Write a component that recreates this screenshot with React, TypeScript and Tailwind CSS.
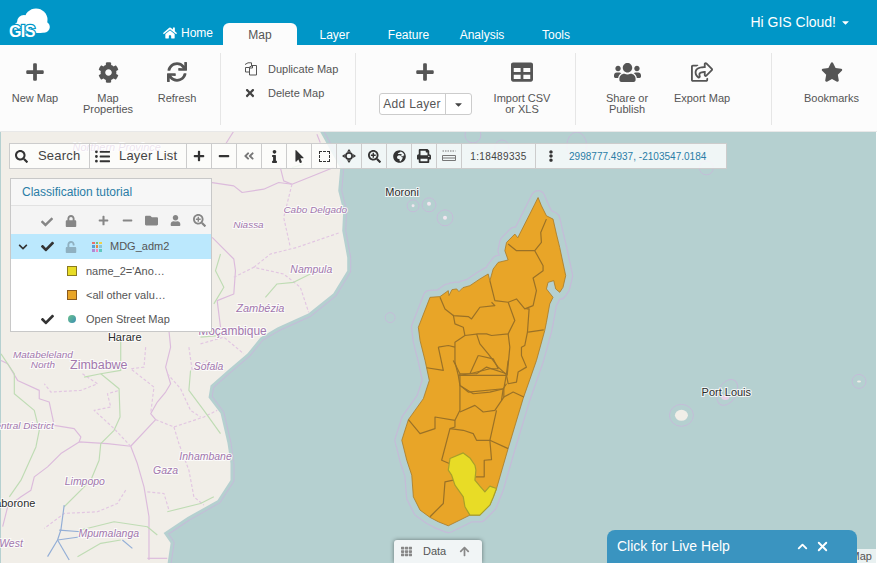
import type { ReactNode } from 'react'
import {
  FaArrowUp,
  FaAngleDoubleLeft,
  FaCaretDown,
  FaCheck,
  FaChevronDown,
  FaCog,
  FaFolder,
  FaGlobeAfrica,
  FaHome,
  FaInfo,
  FaListUl,
  FaLock,
  FaMinus,
  FaMousePointer,
  FaPlus,
  FaPrint,
  FaRegShareSquare,
  FaSearch,
  FaSearchPlus,
  FaStar,
  FaSync,
  FaTable,
  FaTh,
  FaTimes,
  FaUnlock,
  FaUser,
  FaUsers,
  FaEllipsisV,
} from 'react-icons/fa'
import { ChevronUp, X } from 'lucide-react'

const MADAGASCAR =
  'M538.3 196.7 541.7 205 546.7 215 553.3 218.3 556.7 233.3 560 246.7 566 275 563.3 286.7 560 291.7 556 288.3 554 280 548.3 281.7 546.7 288.3 553.3 296.7 550 303.3 546.7 321.7 545 330 536.7 360 523.3 398.3 508.3 448.3 496.7 488.3 490 505 480 515 470 515 460 520 448.3 525.7 438.3 521.7 430 517.3 420 510 413.3 496.7 411.7 475 406.7 460 401.7 440 408.3 419.3 423.3 398.3 429.3 380 425 360 420 340 418.3 326.7 430 296.7 440 296 448.3 290 449 295 452 289 456.7 288.3 459 291 463 287 470 285 480 278.3 488.3 273.3 490 280 493.3 268.3 498.3 261.7 508.3 259.3 505 250 506.7 241.7 515 233.3 518 237 520 233 530 213.3 535 203.3Z'
const YELLOW_AREA =
  'M210 295 250 278 270 293 285 315 288 330 285 360 300 378 315 395 330 378 350 385 340 412 330 435 300 465 270 465 255 440 250 410 225 375 215 345 205 330Z'
const AFRICA =
  'M0 131H320L325 140 340 167 338 190 343 210 342 230 347 257 347 270 333 293 308 313 277 327 260 337 247 353 227 370 210 385 208 397 220 413 227 443 230 463 230 480 217 500 187 517 163 533 170 543 167 563H0Z'

type MapLabel = { x: number; y: number; t: string; size?: number; dark?: boolean; plain?: boolean }

const LABELS: MapLabel[] = [
  { x: 116, y: 150, t: 'Northern Province', size: 11 },
  { x: 315, y: 212, t: 'Cabo Delgado', size: 10 },
  { x: 248, y: 227, t: 'Niassa', size: 10 },
  { x: 311, y: 272, t: 'Nampula', size: 10.5 },
  { x: 260, y: 311, t: 'Zambézia', size: 11 },
  { x: 232, y: 334, t: 'Moçambique', size: 12, plain: true },
  { x: 124, y: 340, t: 'Harare', size: 11, dark: true, plain: true },
  { x: 42, y: 358, t: 'Matabeleland', size: 10 },
  { x: 42, y: 368, t: 'North', size: 10 },
  { x: 98, y: 369, t: 'Zimbabwe', size: 12.5, plain: true },
  { x: 208, y: 370, t: 'Sofala', size: 10.5 },
  { x: 20, y: 429, t: 'Central District', size: 10 },
  { x: 205, y: 460, t: 'Inhambane', size: 10.5 },
  { x: 165, y: 474, t: 'Gaza', size: 10.5 },
  { x: 84, y: 485, t: 'Limpopo', size: 10.5 },
  { x: 10, y: 507, t: 'Gaborone', size: 11, dark: true, plain: true },
  { x: 108, y: 537, t: 'Mpumalanga', size: 10.5 },
  { x: 10, y: 547, t: 'West', size: 10.5 },
  { x: 402, y: 195, t: 'Moroni', size: 11, dark: true, plain: true },
  { x: 727, y: 396, t: 'Port Louis', size: 11, dark: true, plain: true },
]

function MapBackground() {
  return (
    <svg viewBox="0 131 877 432" className="absolute inset-0 h-full w-full" fill="none">
      <rect x="0" y="131" width="877" height="432" fill="#b5d0d0" />

      {/* sea borders around the islands */}
      <g stroke="#c4bcd8" strokeWidth="1">
        <circle cx="473" cy="134" r="8" />
        <circle cx="502" cy="146" r="7" />
        <ellipse cx="577" cy="145" rx="10" ry="14" />
        <circle cx="707" cy="167" r="7" />
        <circle cx="390" cy="317" r="5" />
        <circle cx="413" cy="205" r="6" />
        <circle cx="429" cy="204" r="7" />
        <circle cx="445" cy="217" r="8" />
        <ellipse cx="682" cy="415" rx="12" ry="11" />
        <ellipse cx="728" cy="392" rx="9" ry="14" transform="rotate(30 728 392)" />
        <circle cx="860" cy="381" r="7" />
      </g>
      <circle cx="413" cy="205" r="1.5" fill="#f1e6ef" />
      <circle cx="429" cy="203" r="2" fill="#f1e6ef" />
      <circle cx="445" cy="217" r="2" fill="#f1e6ef" />
      <ellipse cx="682" cy="415" rx="6.5" ry="5.5" fill="#f1eee8" />
      <ellipse cx="726" cy="397" rx="4" ry="2.5" fill="#e9cfe6" />
      <ellipse cx="860" cy="381" rx="2" ry="1" fill="#f1eee8" />

      {/* mainland */}
      <path d={AFRICA} fill="#f1eee8" stroke="#c4bcd8" strokeWidth="8" strokeLinejoin="round" />
      <path d={AFRICA} stroke="#b5d0d0" strokeWidth="6" strokeLinejoin="round" />
      <path d={AFRICA} fill="#f1eee8" />

      {/* roads and borders, zoomed-crop coordinates */}
      <g transform="translate(0 330) scale(.3333)" strokeWidth="3.5" strokeLinejoin="round">
        <g stroke="#dcbbdc">
          <path d="M390 348 465 268 450 250 470 215 495 185 510 160 495 110 510 50 505 0" />
          <path d="M390 348 320 340 235 335 180 370 140 410 100 440 90 480 60 500 20 530 5 590" />
          <path d="M235 335 240 320 220 295 160 285 145 215 115 205 115 180 50 150 20 100 0 90" />
          <path d="M390 348 410 400 430 470 445 560 445 690" />
          <path d="M440 685H500" />
        </g>
        <g stroke="#e2c6e2" strokeDasharray="9 6">
          <path d="M465 268 520 290 610 260 650 240" />
          <path d="M520 290 535 340 565 420 580 500 610 525" />
          <path d="M390 348 340 295 280 240 330 230 320 190 355 180" />
          <path d="M440 485 490 490 505 540" />
          <path d="M375 480 350 520 290 545 190 550 130 595" />
          <path d="M245 130 290 160 240 180 150 185 130 160" />
          <path d="M500 130 540 175 570 240 600 260" />
          <path d="M435 50 430 110 390 115 460 170 450 250" />
          <path d="M565 50 575 120 620 90" />
        </g>
        <g stroke="#bfdcb4">
          <path d="M190 530 250 470 270 450 295 390 300 340 340 300 358 260 355 175 300 130 250 140" />
          <path d="M0 70 40 130 40 190 100 240 115 300 105 350 60 450 25 500" />
          <path d="M500 545 600 520 640 500" />
          <path d="M570 120 565 180 610 240 660 310" />
          <path d="M360 30 360 120 300 130" />
          <path d="M240 600 340 575 440 590 470 615" />
          <path d="M230 680 300 640 360 630" />
        </g>
        <g stroke="#93aed6">
          <path d="M190 525 180 600 170 630 140 680" />
          <path d="M170 630 205 690" />
          <path d="M175 600 240 605" />
          <path d="M170 630 240 620" />
          <path d="M365 630 395 655" />
        </g>
      </g>
      <g transform="translate(200 130) scale(.3333)" strokeWidth="3.5" strokeLinejoin="round">
        <g stroke="#dcbbdc">
          <path d="M0 150 100 165 125 185 190 175 235 155 275 160 350 130 400 110" />
          <path d="M35 320 100 385 105 420 100 490 50 510 60 590" />
          <path d="M240 110 250 150 275 160" />
          <path d="M100 0 75 40" />
          <path d="M350 10 360 35" />
        </g>
        <g stroke="#e2c6e2" strokeDasharray="9 6">
          <path d="M275 160 250 260 270 350" />
          <path d="M160 410 210 370 290 350 420 305" />
          <path d="M100 440 160 410 250 430 300 470 325 545" />
          <path d="M0 640 70 620 130 670" />
        </g>
        <g stroke="#bfdcb4">
          <path d="M195 500 230 460 280 455 330 430" />
          <path d="M60 370 45 420 70 470 40 520" />
          <path d="M0 620 60 615" />
          <path d="M275 110 310 100" />
        </g>
      </g>

      {/* Madagascar */}
      <path d={MADAGASCAR} stroke="#c4bcd8" strokeWidth="15" strokeLinejoin="round" />
      <path d={MADAGASCAR} stroke="#b5d0d0" strokeWidth="12.5" strokeLinejoin="round" />
      <path d={MADAGASCAR} fill="#e8a528" stroke="#a87a24" strokeWidth=".8" strokeLinejoin="round" />
      <g transform="translate(380 190) scale(.3333)" stroke="#9a7127" strokeWidth="3.6" strokeLinejoin="round">
        <path d="M385 160 410 180 465 180 490 225 490 240 460 262 470 300 460 345 435 355 410 325 385 335 345 330 330 270" />
        <path d="M465 180 485 155 483 125 500 85" />
        <path d="M180 320 195 355 220 375 265 378 275 385 300 350 345 345 335 335" />
      </g>
      <g transform="translate(400 280) scale(.3333)" stroke="#9a7127" strokeWidth="3.6" strokeLinejoin="round">
        <path d="M160 103 165 130 190 140 195 165 235 160 260 160 275 165 325 160 345 120 325 65" />
        <path d="M380 85 388 85 383 155 375 195 365 200 365 225 380 260 355 275 350 305 325 310 320 285" />
        <path d="M385 155 432 148" />
        <path d="M325 160 330 200 322 285" />
        <path d="M195 165 165 185 165 245 175 285 180 315 205 335 310 325 320 310" />
        <path d="M115 200 145 195 165 200" />
        <path d="M115 200 130 270 80 262" />
        <path d="M230 160 240 190 265 220 295 260 322 285" />
        <path d="M235 225 280 235 295 265 270 265 210 280 175 285" />
        <path d="M235 225 210 280" />
        <path d="M175 285 320 285" />
        <path d="M310 325 305 360" />
      </g>
      <g transform="translate(380 360) scale(.3333)" stroke="#9a7127" strokeWidth="3.6" strokeLinejoin="round">
        <path d="M240 40 290 40 320 20 380 40 385 0" />
        <path d="M240 40 220 0" />
        <path d="M240 40 240 150 225 180 165 170 165 205 120 220 85 178" />
        <path d="M240 75 280 100 330 95 372 85 372 110 345 150 310 155 285 135 240 155" />
        <path d="M372 85 380 40" />
        <path d="M372 110 400 95 432 110" />
        <path d="M225 180 225 200 210 205 185 300 208 310" />
        <path d="M210 205 250 210 280 220 290 240 330 240 350 150" />
        <path d="M330 240 385 265" />
        <path d="M330 240 335 298 313 300 313 350 285 350" />
        <path d="M220 360 195 365 190 430 150 470" />
        <path d={YELLOW_AREA} fill="#e8dc26" stroke="#a8a02a" />
      </g>

      {LABELS.map((l) => (
        <text
          key={l.t}
          x={l.x}
          y={l.y}
          textAnchor="middle"
          fontSize={l.size ?? 11}
          fontStyle={l.plain ? 'normal' : 'italic'}
          fill={l.dark ? '#2b2b2b' : '#a277ad'}
          stroke="#ffffff"
          strokeOpacity=".8"
          strokeWidth="2"
          paintOrder="stroke"
        >
          {l.t}
        </text>
      ))}
    </svg>
  )
}

function GisLogo() {
  return (
    <svg viewBox="0 0 54 42" className="h-[42px] w-[54px] shrink-0 self-start">
      <g fill="#ffffff">
        <circle cx="36" cy="20" r="11.5" />
        <circle cx="24" cy="22" r="7" />
        <circle cx="44" cy="27" r="5.8" />
        <rect x="14" y="22" width="32" height="11" rx="5" />
      </g>
      <text
        x="9"
        y="37"
        fontSize="16"
        fontWeight="700"
        fill="#ffffff"
        stroke="#0096c7"
        strokeWidth="2.4"
        paintOrder="stroke"
        letterSpacing="-.6"
      >
        GIS
      </text>
    </svg>
  )
}

function TopNav() {
  const tabs = [
    { label: 'Map', w: 'w-[74px]', active: true },
    { label: 'Layer', w: 'w-[75px]' },
    { label: 'Feature', w: 'w-[73px]' },
    { label: 'Analysis', w: 'w-[74px]' },
    { label: 'Tools', w: 'w-[74px]' },
  ]
  return (
    <header className="flex h-[45px] shrink-0 items-end bg-[#0096c7] pl-[0px] text-white">
      <GisLogo />
      <a className="mb-[4px] ml-[109px] mr-[9px] flex h-[16px] w-[51px] items-center gap-[4px] text-[12px]">
        <FaHome size={14} />
        Home
      </a>
      {tabs.map((t) => (
        <a
          key={t.label}
          className={
            t.active
              ? `${t.w} flex h-[22px] items-start justify-center rounded-t-[6px] bg-[#fcfcfc] pt-[3px] text-[12px] text-[#555555]`
              : `${t.w} flex h-[22px] items-start justify-center pt-[3px] text-[12px]`
          }
        >
          {t.label}
        </a>
      ))}
      <div className="ml-auto mr-[26px] mt-[14px] flex items-center gap-[4px] self-start text-[14px] leading-[16px]">
        Hi GIS Cloud!
        <FaCaretDown size={11} />
      </div>
    </header>
  )
}

function RibbonItem({ icon, label, className }: { icon: ReactNode; label: ReactNode; className: string }) {
  return (
    <button className={`flex flex-col items-center pt-[9px] text-center text-[11px] leading-[11px] text-[#555555] ${className}`}>
      <span className="flex h-[20px] items-center justify-center">{icon}</span>
      <span className="mt-[11px]">{label}</span>
    </button>
  )
}

function DuplicateIcon() {
  return (
    <svg viewBox="0 0 14 14" className="h-[14px] w-[14px]" fill="none" stroke="#555555" strokeWidth="1">
      <path d="M1 2.5 4 .8H7.5V4L5 5.5H1.5V10H5" />
      <path d="M5.5 5.5 8 3.5H12.5V13H5.5Z" />
      <path d="M5.5 6H8.5V3.5" />
    </svg>
  )
}

function Ribbon() {
  return (
    <section className="flex h-[86px] shrink-0 items-start bg-[#fcfcfc] pt-[8px]">
      <div className="flex h-[72px] w-[221px] border-r border-[#e6e6e6]">
        <RibbonItem className="w-[70px]" icon={<FaPlus size={20} color="#555555" />} label="New Map" />
        <RibbonItem className="w-[76px]" icon={<FaCog size={21} color="#555555" />} label={<>Map<br />Properties</>} />
        <RibbonItem className="w-[62px]" icon={<FaSync size={20} color="#555555" />} label="Refresh" />
      </div>
      <div className="flex h-[72px] w-[135px] flex-col border-r border-[#e6e6e6] pt-[4px] text-[11px] text-[#555555]">
        <div className="flex h-[24px] items-center pl-[23px]">
          <span className="flex w-[24px] justify-start"><DuplicateIcon /></span>
          Duplicate Map
        </div>
        <div className="flex h-[24px] items-center pl-[23px]">
          <span className="flex w-[24px] justify-start"><FaTimes size={12} color="#444444" /></span>
          Delete Map
        </div>
      </div>
      <div className="flex h-[72px] w-[220px] border-r border-[#e6e6e6]">
        <div className="flex w-[138px] flex-col items-center pt-[9px]">
          <span className="flex h-[20px] items-center"><FaPlus size={20} color="#555555" /></span>
          <div className="mt-[11px] flex h-[22px] w-[93px] items-stretch rounded-[3px] border border-[#cccccc] bg-white text-[12px] tracking-[.3px] text-[#555555]">
            <span className="flex w-[66px] items-center justify-center border-r border-[#cccccc]">Add Layer</span>
            <span className="flex flex-1 items-center justify-center"><FaCaretDown size={11} color="#444444" /></span>
          </div>
        </div>
        <RibbonItem className="w-[56px] whitespace-nowrap" icon={<FaTable size={22} color="#555555" />} label={<>Import CSV<br />or XLS</>} />
      </div>
      <div className="flex h-[72px] w-[196px] border-r border-[#e6e6e6] pl-[16px]">
        <RibbonItem className="w-[70px]" icon={<FaUsers size={27} color="#555555" />} label={<>Share or<br />Publish</>} />
        <RibbonItem className="w-[80px]" icon={<FaRegShareSquare size={22} color="#555555" />} label="Export Map" />
      </div>
      <div className="flex h-[72px] flex-1 pl-[14px]">
        <RibbonItem className="w-[91px]" icon={<FaStar size={22} color="#555555" />} label="Bookmarks" />
      </div>
    </section>
  )
}

function ToolCell({ children }: { children: ReactNode }) {
  return <div className="flex h-full w-[25px] items-center justify-center border-r border-[#cccccc] text-[#333333]">{children}</div>
}

function MoveIcon() {
  return (
    <svg viewBox="0 0 14 14" className="h-[14px] w-[14px]" fill="#333333">
      <path d="M7 3a4 4 0 1 0 0 8 4 4 0 0 0 0-8Zm0 1.7a2.3 2.3 0 1 1 0 4.6 2.3 2.3 0 0 1 0-4.6Z" />
      <path d="M7 0 9 2.8H5ZM7 14 5 11.2H9ZM0 7 2.8 5V9ZM14 7 11.2 9V5Z" />
    </svg>
  )
}

function ScaleIcon() {
  return (
    <svg viewBox="0 0 14 12" className="h-[12px] w-[14px]" fill="none" stroke="#777777">
      <path d="M.5 1H13.5" strokeDasharray="1.5 1" />
      <path d="M.5 5.5H13.5V10.5H.5Z" />
      <path d="M1 8H13" />
    </svg>
  )
}

function Toolbar() {
  return (
    <div className="absolute left-[9px] top-[11px] flex h-[26px] w-[718px] items-center border border-[#cccccc] bg-white/80 text-[#444444]">
      <div className="flex h-full w-[80px] items-center border-r border-[#cccccc] pl-[5px] text-[13px] tracking-[.2px]">
        <FaSearch size={13} color="#333333" />
        <span className="ml-[10px]">Search</span>
      </div>
      <div className="flex h-full w-[97px] items-center border-r border-[#cccccc] pl-[5px] text-[13px] tracking-[.2px]">
        <FaListUl size={15} color="#333333" />
        <span className="ml-[9px]">Layer List</span>
      </div>
      <ToolCell><FaPlus size={12} /></ToolCell>
      <ToolCell><FaMinus size={12} /></ToolCell>
      <ToolCell><FaAngleDoubleLeft size={12} color="#777777" /></ToolCell>
      <ToolCell><FaInfo size={13} /></ToolCell>
      <ToolCell><FaMousePointer size={13} /></ToolCell>
      <ToolCell><span className="h-[11px] w-[11px] border border-dashed border-[#333333]" /></ToolCell>
      <ToolCell><MoveIcon /></ToolCell>
      <ToolCell><FaSearchPlus size={13} /></ToolCell>
      <ToolCell><FaGlobeAfrica size={13} /></ToolCell>
      <ToolCell><FaPrint size={14} /></ToolCell>
      <ToolCell><ScaleIcon /></ToolCell>
      <div className="flex h-full w-[74px] items-center justify-center border-r border-[#cccccc] text-[10px] tracking-[.35px]">
        1:18489335
      </div>
      <div className="flex h-full flex-1 items-center pl-[9px] text-[10px] text-[#2a7da6]">
        <FaEllipsisV size={12} color="#333333" />
        <span className="ml-[12px] tracking-[.02px]">2998777.4937, -2103547.0184</span>
      </div>
    </div>
  )
}

function MdgSwatch() {
  const colors = ['#e8706a', '#6fc27a', '#f0d24a', '#5a9fd4', '#e88a3a', '#8ac6d8', '#b08ad6', '#f08ac0', '#60c8c0']
  return (
    <div className="ml-[9px] grid h-[10px] w-[10px] grid-cols-3 gap-[1px]">
      {colors.map((c) => (
        <span key={c} className="block" style={{ backgroundColor: c }} />
      ))}
    </div>
  )
}

function GlobeDot() {
  return (
    <span className="block h-[8px] w-[8px] rounded-full bg-gradient-to-br from-[#6cc08a] to-[#3d8fb0]" />
  )
}

function LayerPanel() {
  return (
    <div className="absolute left-[10px] top-[46px] w-[202px] border border-[#c8c8c8] bg-white text-[11px] text-[#555555]">
      <div className="flex h-[27px] items-center border-b border-[#e2e2e2] bg-[#f7f7f7] pl-[11px] text-[12px] text-[#2a7da6]">
        Classification tutorial
      </div>
      <div className="flex h-[28px] items-center bg-[#f4f4f4] text-[#868686]">
        <span className="w-[24px]" />
        <span className="flex w-[24px] justify-center pt-[3px]"><FaCheck size={12} /></span>
        <span className="flex w-[24px] justify-center pt-[1px]"><FaLock size={12} /></span>
        <span className="ml-[9px] flex w-[24px] justify-center"><FaPlus size={11} /></span>
        <span className="flex w-[24px] justify-center"><FaMinus size={11} /></span>
        <span className="flex w-[24px] justify-center"><FaFolder size={13} /></span>
        <span className="flex w-[24px] justify-center"><FaUser size={11} /></span>
        <span className="flex w-[24px] justify-center"><FaSearchPlus size={13} /></span>
      </div>
      <div className="flex h-[25px] items-center bg-[#bbe8fd]">
        <span className="flex w-[24px] justify-center"><FaChevronDown size={10} color="#333333" /></span>
        <span className="flex w-[24px] justify-center"><FaCheck size={13} color="#333333" /></span>
        <span className="flex w-[24px] justify-center"><FaUnlock size={12} color="#8fb0c0" /></span>
        <MdgSwatch />
        <span className="ml-[8px]">MDG_adm2</span>
      </div>
      <div className="flex h-[24px] items-center">
        <span className="w-[48px]" />
        <span className="flex w-[24px] justify-center pl-[1px]"><span className="h-[10px] w-[10px] border border-[#8a7a20] bg-[#e8dc26]" /></span>
        <span className="ml-[3px]">name_2='Ano…</span>
      </div>
      <div className="flex h-[24px] items-center">
        <span className="w-[48px]" />
        <span className="flex w-[24px] justify-center pl-[1px]"><span className="h-[10px] w-[10px] border border-[#8a5a20] bg-[#e8a528]" /></span>
        <span className="ml-[3px]">&lt;all other valu…</span>
      </div>
      <div className="flex h-[24px] items-center">
        <span className="w-[24px]" />
        <span className="flex w-[24px] justify-center"><FaCheck size={13} color="#333333" /></span>
        <span className="flex w-[24px] justify-center pl-[1px]"><GlobeDot /></span>
        <span className="ml-[3px]">Open Street Map</span>
      </div>
    </div>
  )
}

function DataTab() {
  return (
    <div className="absolute bottom-0 left-[394px] flex h-[23px] w-[88px] items-center rounded-t-[3px] bg-[#f1f5f6] pl-[7px] text-[11px] text-[#555555] shadow-[0_0_4px_rgba(0,0,0,.45)]">
      <FaTh size={11} color="#888888" />
      <span className="ml-[11px]">Data</span>
      <FaArrowUp size={11} color="#888888" className="ml-[13px]" />
    </div>
  )
}

function LiveHelp() {
  return (
    <div className="absolute bottom-0 left-[607px] flex h-[33px] w-[250px] items-center rounded-t-[8px] bg-[#3a94c0] pl-[10px] text-[14px] text-white">
      Click for Live Help
      <ChevronUp size={15} strokeWidth={3} className="ml-[65px]" />
      <X size={15} strokeWidth={3} className="ml-[5px]" />
    </div>
  )
}

export default function App() {
  return (
    <div className="flex h-[563px] w-[877px] flex-col overflow-hidden font-['Liberation_Sans',Arial,sans-serif]">
      <TopNav />
      <Ribbon />
      <main className="relative flex-1 overflow-hidden border-t border-[#e8e8e8]">
        <MapBackground />
        <Toolbar />
        <LayerPanel />
        <div className="absolute bottom-0 right-0 whitespace-nowrap bg-white/70 pl-[2px] pr-[5px] text-[11px] leading-[14px] text-[#555555]">
          © OpenStreetMap
        </div>
        <DataTab />
        <LiveHelp />
      </main>
    </div>
  )
}
